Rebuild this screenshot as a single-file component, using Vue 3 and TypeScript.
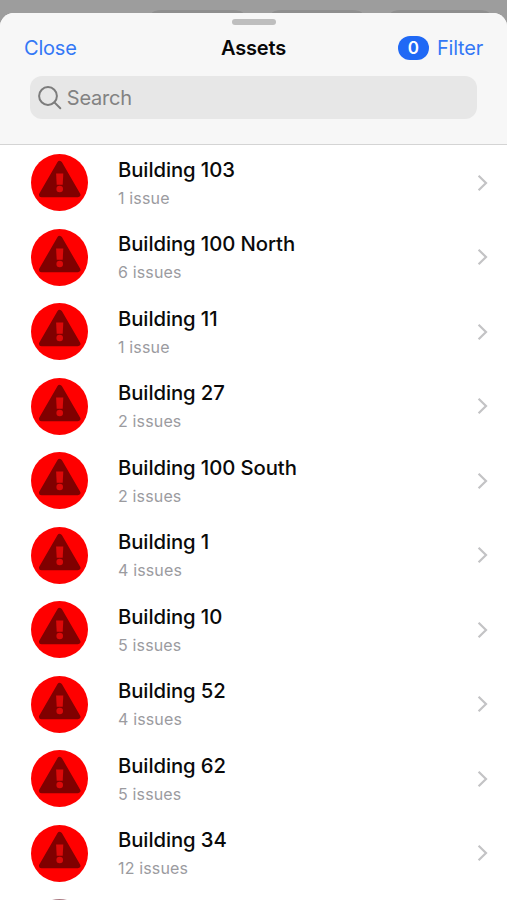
<script setup lang="ts">
import { ref } from 'vue'

interface Asset {
  name: string
  issues: number
}

const search = ref('')
const filterCount = ref(0)

const assets: Asset[] = [
  { name: 'Building 103', issues: 1 },
  { name: 'Building 100 North', issues: 6 },
  { name: 'Building 11', issues: 1 },
  { name: 'Building 27', issues: 2 },
  { name: 'Building 100 South', issues: 2 },
  { name: 'Building 1', issues: 4 },
  { name: 'Building 10', issues: 5 },
  { name: 'Building 52', issues: 4 },
  { name: 'Building 62', issues: 5 },
  { name: 'Building 34', issues: 12 },
]

const issueLabel = (n: number): string => `${n} ${n === 1 ? 'issue' : 'issues'}`
</script>

<template>
  <div class="screen">
    <div class="backdrop"><i></i><i></i><i></i></div>
    <section class="sheet">
      <header class="header">
        <div class="grabber"></div>
        <nav class="nav">
          <a class="close">Close</a>
          <h1 class="heading">Assets</h1>
          <div class="filter">
            <span class="badge">{{ filterCount }}</span>
            <a class="filter-label">Filter</a>
          </div>
        </nav>
        <label class="search">
          <svg class="search-icon" viewBox="0 0 24 24">
            <circle cx="10" cy="10" r="8.9" />
            <path d="M16.4 16.4 22.3 22.3" />
          </svg>
          <input v-model="search" class="search-input" type="text" placeholder="Search" />
        </label>
      </header>
      <ul class="list">
        <li v-for="asset in assets" :key="asset.name" class="row">
          <svg class="alert" viewBox="0 0 57 57">
            <circle cx="28.5" cy="28.5" r="28.5" fill="#ff0000" />
            <path
              d="M28.7 9.3 46.9 40.7H10.5Z"
              fill="#800000"
              stroke="#800000"
              stroke-width="5"
              stroke-linejoin="round"
            />
            <path d="M25.1 19.6h7.2l-.6 11.2h-6Z" fill="#dc0a0a" />
            <circle cx="28.7" cy="35" r="3.3" fill="#dc0a0a" />
          </svg>
          <div class="text">
            <div class="name">{{ asset.name }}</div>
            <div class="issues">{{ issueLabel(asset.issues) }}</div>
          </div>
          <svg class="chevron" viewBox="0 0 12 18">
            <path d="M1.6 1.7 9 9 1.6 16.3" />
          </svg>
        </li>
        <li class="row">
          <svg class="alert" viewBox="0 0 57 57">
            <circle cx="28.5" cy="28.5" r="28.5" fill="#a87880" />
          </svg>
        </li>
      </ul>
    </section>
  </div>
</template>

<style>
body {
  margin: 0;
  background: #9d9d9d;
}
</style>

<style scoped>
.screen {
  width: 507px;
  height: 900px;
  overflow: hidden;
  background: #9d9d9d;
  font-family: Inter, 'Liberation Sans', sans-serif;
  display: flex;
  flex-direction: column;
}
.backdrop {
  height: 13px;
  flex: none;
  box-sizing: border-box;
  padding: 10px 18px 0 152px;
  display: grid;
  grid-template-columns: 91px 90px 98px;
  justify-content: space-between;
}
.backdrop i {
  background: #8f8f8f;
  border-radius: 10px 10px 0 0 / 3px 3px 0 0;
}
.sheet {
  flex: 1;
  min-height: 0;
  overflow: hidden;
  border-radius: 14px 14px 0 0;
  background: #fff;
}
.header {
  box-sizing: border-box;
  height: 132px;
  padding-top: 6px;
  background: #f7f7f7;
  border-bottom: 1px solid #d4d4d4;
}
.grabber {
  width: 44px;
  height: 6px;
  margin: 0 auto;
  border-radius: 3px;
  background: #bebebe;
}
.nav {
  display: grid;
  grid-template-columns: 1fr auto 1fr;
  align-items: center;
  height: 24px;
  margin-top: 10.7px;
  padding: 0 24px;
  font-size: 20px;
  line-height: 24px;
}
.close,
.filter-label {
  color: #3478f6;
  letter-spacing: -0.2px;
}
.heading {
  margin: 0;
  font-size: 20px;
  line-height: 24px;
  font-weight: 600;
  color: #080808;
  letter-spacing: -0.2px;
}
.filter {
  display: flex;
  justify-content: flex-end;
  align-items: center;
  gap: 8px;
}
.badge {
  width: 31px;
  height: 24px;
  border-radius: 12px;
  background: #2069f5;
  color: #fff;
  font-size: 17px;
  font-weight: 600;
  text-align: center;
}
.search {
  display: flex;
  align-items: center;
  gap: 5px;
  box-sizing: border-box;
  height: 43.6px;
  margin: 16px 29.7px 0 30.3px;
  padding: 1px 7.5px 0;
  border-radius: 12px;
  background: #e7e7e7;
}
.search-icon {
  width: 24px;
  height: 24px;
  flex: none;
  fill: none;
  stroke: #7c7c7c;
  stroke-width: 2;
  stroke-linecap: round;
}
.search-input {
  flex: 1;
  min-width: 0;
  padding: 0;
  border: 0;
  outline: 0;
  background: transparent;
  font: 20px/26px Inter, 'Liberation Sans', sans-serif;
  letter-spacing: -0.2px;
  color: #111;
}
.search-input::placeholder {
  color: #828282;
  opacity: 1;
}
.list {
  margin: 0;
  padding: 0.5px 0 0;
  list-style: none;
}
.row {
  display: flex;
  align-items: center;
  box-sizing: border-box;
  height: 74.5px;
  padding: 0 18px 0 31px;
}
.alert {
  width: 57px;
  height: 57px;
  flex: none;
}
.text {
  flex: 1;
  margin-left: 30px;
  padding-top: 2.2px;
}
.name {
  font-size: 20.3px;
  line-height: 28px;
  font-weight: 500;
  color: #0a0a0a;
  letter-spacing: -0.08px;
}
.issues {
  font-size: 16px;
  line-height: 28px;
  color: #9b9b9f;
  letter-spacing: 0.15px;
}
.chevron {
  width: 12px;
  height: 18px;
  flex: none;
  fill: none;
  stroke: #c3c3c5;
  stroke-width: 2.2;
}
</style>
